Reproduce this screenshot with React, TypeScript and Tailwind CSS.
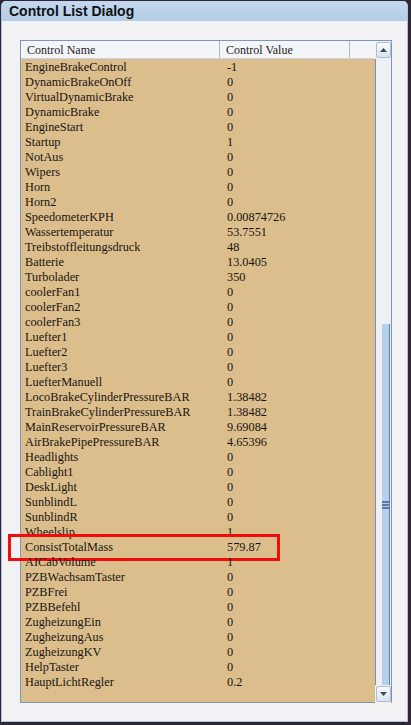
const controls: [string, string][] = [
  ['EngineBrakeControl', '-1'],
  ['DynamicBrakeOnOff', '0'],
  ['VirtualDynamicBrake', '0'],
  ['DynamicBrake', '0'],
  ['EngineStart', '0'],
  ['Startup', '1'],
  ['NotAus', '0'],
  ['Wipers', '0'],
  ['Horn', '0'],
  ['Horn2', '0'],
  ['SpeedometerKPH', '0.00874726'],
  ['Wassertemperatur', '53.7551'],
  ['Treibstoffleitungsdruck', '48'],
  ['Batterie', '13.0405'],
  ['Turbolader', '350'],
  ['coolerFan1', '0'],
  ['coolerFan2', '0'],
  ['coolerFan3', '0'],
  ['Luefter1', '0'],
  ['Luefter2', '0'],
  ['Luefter3', '0'],
  ['LuefterManuell', '0'],
  ['LocoBrakeCylinderPressureBAR', '1.38482'],
  ['TrainBrakeCylinderPressureBAR', '1.38482'],
  ['MainReservoirPressureBAR', '9.69084'],
  ['AirBrakePipePressureBAR', '4.65396'],
  ['Headlights', '0'],
  ['Cablight1', '0'],
  ['DeskLight', '0'],
  ['SunblindL', '0'],
  ['SunblindR', '0'],
  ['Wheelslip', '1'],
  ['ConsistTotalMass', '579.87'],
  ['AICabVolume', '1'],
  ['PZBWachsamTaster', '0'],
  ['PZBFrei', '0'],
  ['PZBBefehl', '0'],
  ['ZugheizungEin', '0'],
  ['ZugheizungAus', '0'],
  ['ZugheizungKV', '0'],
  ['HelpTaster', '0'],
  ['HauptLichtRegler', '0.2'],
];

function ScrollButton({ down }: { down?: boolean }) {
  return (
    <div className="h-[16px] w-[15px] mx-auto flex items-center justify-center border border-[#a9bdd4] rounded-[2px] bg-gradient-to-b from-[#fbfcfe] to-[#d9e3ef]">
      <svg width="7" height="4" viewBox="0 0 7 4" className={down ? 'rotate-180' : ''}>
        <path d="M0 4 L3.5 0 L7 4 Z" fill="#3d4a5c" />
      </svg>
    </div>
  );
}

export default function App() {
  return (
    <div
      className="w-[411px] h-[725px] bg-[#2f2533] pl-[1px] pt-[1px] pr-[3px] pb-[3px]"
      style={{ fontFamily: '"Liberation Serif", "Times New Roman", serif' }}
    >
      <div className="h-full flex flex-col bg-[#f2f2f4] rounded-t-[5px] border-x border-b border-[#a9c3de] overflow-hidden">
        {/* Title bar */}
        <div className="h-[20px] shrink-0 bg-gradient-to-b from-[#c3d8ee] to-[#b3cde6] pl-[7px] flex items-center">
          <span className="text-[14px] font-bold text-[#111] font-['Liberation_Sans',sans-serif] leading-none">
            Control List Dialog
          </span>
        </div>

        {/* List box */}
        <div className="ml-[18px] mt-[19px] w-[372px] h-[663px] border border-[#7b96b8] flex">
          <div className="flex-1 flex flex-col">
            <div className="h-[18px] shrink-0 flex bg-[#f4f5f8] border-b border-[#c9d4e2] text-[12px] text-[#1c1c1c] leading-none">
              <div className="w-[199px] border-r border-[#a9bacf] pl-[6px] flex items-center">Control Name</div>
              <div className="w-[130px] border-r border-[#a9bacf] pl-[6px] flex items-center">Control Value</div>
            </div>
            <div className="flex-1 bg-[#dbbe8c] pt-[1px] text-[12.3px] text-[#1a1412]">
              {controls.map(([name, value]) => (
                <div key={name} className="relative h-[15px] flex items-center leading-none">
                  <div className="w-[201px] pl-[4px] whitespace-nowrap">{name}</div>
                  <div className="pl-[5px]">{value}</div>
                  {name === 'ConsistTotalMass' && (
                    <div className="absolute left-[-13px] top-[-6px] w-[272px] h-[27px] border-[3px] border-[#f20d0d]" />
                  )}
                </div>
              ))}
            </div>
          </div>

          {/* Vertical scrollbar */}
          <div className="w-[16px] flex flex-col">
            <div className="pt-[1px] bg-[#f2f2f4]">
              <ScrollButton />
            </div>
            <div className="flex-1 flex flex-col border-l border-[#7592ba] bg-[#eef0f5] pl-[6px] mt-[1px]">
              <div className="mt-[265px] h-[361px] w-[8px] bg-[#b5d1ea] border-r border-[#5f7fa8] flex flex-col items-center justify-center gap-[1px]">
                <div className="w-[7px] h-[2px] bg-[#5a7aa5]" />
                <div className="w-[7px] h-[2px] bg-[#5a7aa5]" />
                <div className="w-[7px] h-[2px] bg-[#5a7aa5]" />
              </div>
            </div>
            <div className="pb-[1px] pt-[1px] bg-[#f2f2f4]">
              <ScrollButton down />
            </div>
          </div>
        </div>
      </div>
    </div>
  );
}
